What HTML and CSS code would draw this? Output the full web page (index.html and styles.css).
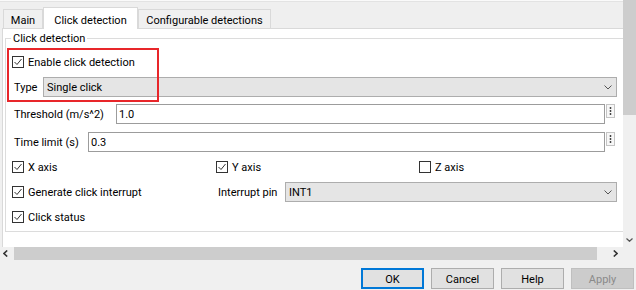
FILE: index.html
```html
<!DOCTYPE html>
<html>
<head>
<meta charset="utf-8">
<link rel="stylesheet" href="styles.css">
</head>
<body>
<div class="window">
  <div class="scroll-area">
    <div class="viewport">
      <div class="top-edge"></div>
      <div class="tabbar">
        <div class="tab tab-main">Main</div>
        <div class="tab tab-active">Click detection</div>
        <div class="tab tab-conf">Configurable detections</div>
      </div>
      <div class="panel">
        <div class="group">
          <span class="legend">Click detection</span>
          <div class="highlight"></div>

          <div class="row row-enable">
            <label class="check"><span class="box"><svg viewBox="0 0 10 10" width="10" height="10"><polyline points="1.5,5 4,7.5 8.5,2" fill="none" stroke="#333" stroke-width="1"/></svg></span>Enable click detection</label>
          </div>

          <div class="row row-type">
            <span class="lbl lbl-type">Type</span>
            <div class="combo"><span>Single click</span><svg class="chev" viewBox="0 0 8 5" width="8" height="5"><polyline points="0.5,0.5 4,4 7.5,0.5" fill="none" stroke="#555" stroke-width="1"/></svg></div>
          </div>

          <div class="row row-threshold">
            <span class="lbl lbl-threshold">Threshold (m/s^2)</span>
            <div class="input">1.0</div>
            <div class="spin"><svg viewBox="0 0 7 12" width="7" height="12"><circle cx="3.5" cy="3" r="0.9" fill="#333"/><circle cx="3.5" cy="6" r="0.9" fill="#333"/><circle cx="3.5" cy="9" r="0.9" fill="#333"/></svg></div>
          </div>

          <div class="row row-time">
            <span class="lbl lbl-time">Time limit (s)</span>
            <div class="input">0.3</div>
            <div class="spin"><svg viewBox="0 0 7 12" width="7" height="12"><circle cx="3.5" cy="3" r="0.9" fill="#333"/><circle cx="3.5" cy="6" r="0.9" fill="#333"/><circle cx="3.5" cy="9" r="0.9" fill="#333"/></svg></div>
          </div>

          <div class="row row-axes">
            <label class="check"><span class="box"><svg viewBox="0 0 10 10" width="10" height="10"><polyline points="1.5,5 4,7.5 8.5,2" fill="none" stroke="#333" stroke-width="1"/></svg></span>X axis</label>
            <label class="check"><span class="box"><svg viewBox="0 0 10 10" width="10" height="10"><polyline points="1.5,5 4,7.5 8.5,2" fill="none" stroke="#333" stroke-width="1"/></svg></span>Y axis</label>
            <label class="check"><span class="box"></span>Z axis</label>
          </div>

          <div class="row row-interrupt">
            <label class="check"><span class="box"><svg viewBox="0 0 10 10" width="10" height="10"><polyline points="1.5,5 4,7.5 8.5,2" fill="none" stroke="#333" stroke-width="1"/></svg></span>Generate click interrupt</label>
            <div class="pin">
              <span class="lbl lbl-pin">Interrupt pin</span>
              <div class="combo"><span>INT1</span><svg class="chev" viewBox="0 0 8 5" width="8" height="5"><polyline points="0.5,0.5 4,4 7.5,0.5" fill="none" stroke="#555" stroke-width="1"/></svg></div>
            </div>
          </div>

          <div class="row row-status">
            <label class="check"><span class="box"><svg viewBox="0 0 10 10" width="10" height="10"><polyline points="1.5,5 4,7.5 8.5,2" fill="none" stroke="#333" stroke-width="1"/></svg></span>Click status</label>
          </div>
        </div>
      </div>
    </div>

    <div class="vscroll">
      <div class="vthumb"></div>
      <div class="vtrack"></div>
      <div class="varrow"><svg viewBox="0 0 7 4" width="7" height="4"><polyline points="0.5,0.5 3.5,3.3 6.5,0.5" fill="none" stroke="#555" stroke-width="1.2"/></svg></div>
    </div>

    <div class="hscroll">
      <div class="harrow harrow-left"><svg viewBox="0 0 5 7" width="5" height="7"><polyline points="4.2,0.5 1,3.5 4.2,6.5" fill="none" stroke="#333" stroke-width="1.6"/></svg></div>
      <div class="hthumb"></div>
      <div class="harrow harrow-right"><svg viewBox="0 0 5 7" width="5" height="7"><polyline points="0.8,0.5 4,3.5 0.8,6.5" fill="none" stroke="#333" stroke-width="1.6"/></svg></div>
    </div>

    <div class="corner"></div>
  </div>

  <div class="buttons">
    <button class="btn btn-default">OK</button>
    <button class="btn">Cancel</button>
    <button class="btn">Help</button>
    <button class="btn btn-disabled">Apply</button>
  </div>
</div>
</body>
</html>
```

FILE: styles.css
```css
* {
  box-sizing: border-box;
}

html, body {
  margin: 0;
  padding: 0;
}

body {
  width: 636px;
  height: 290px;
  overflow: hidden;
  background: #f0f0f0;
  font-family: Roboto, "Noto Sans", sans-serif;
  font-size: 11px;
  color: #000;
}

.window {
  display: flex;
  flex-direction: column;
  width: 636px;
  height: 290px;
}

.scroll-area {
  display: grid;
  grid-template-columns: 623px 13px;
  grid-template-rows: 247px 13px;
}

/* ---------- viewport ---------- */
.viewport {
  overflow: hidden;
  background: #f0f0f0;
  display: flex;
  flex-direction: column;
}

.top-edge {
  height: 2px;
  flex: none;
  background: #fafafa;
  border-bottom: 1px solid #e3e3e3;
}

.tabbar {
  height: 26px;
  flex: none;
  background: #efefef;
  display: flex;
  align-items: flex-end;
  padding-left: 3px;
  position: relative;
  z-index: 1;
}

.tab {
  border: 1px solid #d9d9d9;
  border-bottom: none;
  display: flex;
  align-items: center;
  justify-content: center;
  white-space: nowrap;
}

.tab-main {
  width: 40px;
  height: 19px;
  padding-top: 2px;
  background: #f0f0f0;
}

.tab-active {
  width: 95px;
  height: 22px;
  margin-left: 0;
  margin-bottom: -1px;
  padding-top: 3px;
  background: #fff;
}

.tab-conf {
  width: 133px;
  height: 19px;
  padding-top: 2px;
  background: #f0f0f0;
}

.panel {
  flex: 1;
  background: #fff;
  border-top: 1px solid #d9d9d9;
  border-left: 1px solid #d9d9d9;
  margin-left: 2px;
  padding-top: 9px;
}

.group {
  position: relative;
  width: 660px;
  margin-left: 2px;
  border: 1px solid #dcdcdc;
  padding: 13px 0 4px 6px;
}

.legend {
  position: absolute;
  top: -7px;
  left: 5px;
  line-height: 13px;
  padding: 0 2px;
  background: #fff;
}

.highlight {
  position: absolute;
  left: 1px;
  top: 9px;
  width: 152px;
  height: 54px;
  border: 2px solid #e8262a;
  pointer-events: none;
}

/* ---------- rows ---------- */
.row {
  width: 605px;
  height: 20px;
  display: flex;
  align-items: center;
}

.row-type { margin-top: 5px; }
.row-threshold { margin-top: 7px; }
.row-time { margin-top: 8px; }
.row-axes { margin-top: 5px; display: grid; grid-template-columns: 204px 203px 1fr; align-items: center; }
.row-interrupt { margin-top: 5px; display: grid; grid-template-columns: 204px 1fr; align-items: center; }
.row-status { margin-top: 5px; }

.check {
  display: flex;
  align-items: center;
  gap: 4px;
  white-space: nowrap;
}

.box {
  width: 12px;
  height: 12px;
  flex: none;
  border: 1px solid #333;
  background: #fff;
  display: flex;
  align-items: center;
  justify-content: center;
}

.box svg {
  display: block;
}

.lbl {
  margin-left: 2px;
  flex: none;
  white-space: nowrap;
}

.lbl-type { width: 29px; }
.lbl-threshold { width: 102px; }
.lbl-time { width: 74px; }
.lbl-pin { width: 67px; }

.combo {
  flex: 1;
  height: 20px;
  border: 1px solid #adadad;
  background: #e5e5e5;
  padding-left: 3px;
  display: flex;
  align-items: center;
  justify-content: space-between;
}

.chev {
  margin-right: 4px;
  display: block;
}

.input {
  flex: 1;
  height: 20px;
  border: 1px solid #9c9c9c;
  background: #fff;
  padding-left: 2px;
  display: flex;
  align-items: center;
}

.spin {
  width: 9px;
  height: 14px;
  flex: none;
  align-self: flex-start;
  margin-left: 1px;
  margin-right: 2px;
  border: 1px solid #c4c4c4;
  background: #f7f7f7;
  display: flex;
  align-items: center;
  justify-content: center;
}

.spin svg {
  display: block;
}

.pin {
  display: flex;
  align-items: center;
}

/* ---------- scrollbars ---------- */
.vscroll {
  background: #f0f0f0;
  display: flex;
  flex-direction: column;
}

.vthumb {
  height: 115px;
  background: #cdcdcd;
}

.vtrack {
  flex: 1;
}

.varrow {
  height: 15px;
  display: flex;
  align-items: center;
  justify-content: center;
}

.varrow svg { display: block; }

.hscroll {
  background: #f0f0f0;
  display: flex;
  align-items: stretch;
}

.harrow {
  display: flex;
  align-items: center;
}

.harrow svg { display: block; }

.harrow-left {
  width: 14px;
  padding-left: 3px;
}

.harrow-right {
  flex: 1;
  padding-left: 16px;
}

.hthumb {
  width: 583px;
  background: #cdcdcd;
}

.corner {
  background: #f0f0f0;
}

/* ---------- buttons ---------- */
.buttons {
  display: flex;
  justify-content: flex-end;
  gap: 7px;
  padding: 8px 2px 0 0;
}

.btn {
  width: 63px;
  height: 21px;
  border: 1px solid #adadad;
  background: #e1e1e1;
  font-family: Roboto, "Noto Sans", sans-serif;
  font-size: 11px;
  color: #000;
  padding: 2px 0 0 0;
  margin: 0;
}

.btn-default {
  border: 2px solid #0078d7;
}

.btn-disabled {
  background: #cccccc;
  border-color: #bfbfbf;
  color: #8a8a8a;
}
```
